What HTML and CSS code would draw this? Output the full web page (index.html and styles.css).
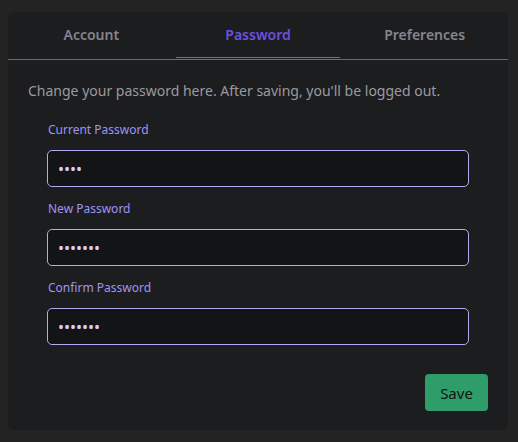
FILE: index.html
```html
<!DOCTYPE html>
<html lang="en">
<head>
<meta charset="utf-8">
<title>Password</title>
<link rel="stylesheet" href="styles.css">
</head>
<body>
<div class="card">
  <div class="tabs">
    <div class="tab">Account</div>
    <div class="tab active">Password</div>
    <div class="tab">Preferences</div>
  </div>
  <div class="body">
    <p class="desc">Change your password here. After saving, you'll be logged out.</p>
    <div class="form">
      <div class="field">
        <label class="label" for="cur">Current Password</label>
        <input class="input" id="cur" type="password" value="abcd">
      </div>
      <div class="field">
        <label class="label" for="new">New Password</label>
        <input class="input" id="new" type="password" value="abcdefg">
      </div>
      <div class="field">
        <label class="label" for="conf">Confirm Password</label>
        <input class="input" id="conf" type="password" value="abcdefg">
      </div>
    </div>
    <div class="actions">
      <button class="btn" type="button">Save</button>
    </div>
  </div>
</div>
</body>
</html>
```
FILE: styles.css
```css
html, body {
  margin: 0;
  padding: 0;
  background: #232323;
}
body {
  padding: 12px 10px 12px 8px;
  font-family: "Noto Sans", "Open Sans", sans-serif;
}
.card {
  width: 500px;
  height: 418px;
  box-sizing: border-box;
  background: #1c1d1f;
  border-radius: 6px;
  display: flex;
  flex-direction: column;
}
.tabs {
  display: grid;
  grid-template-columns: repeat(3, 1fr);
  border-bottom: 1px solid #6a6a70;
}
.tab {
  margin: 0 1px -1px;
  padding: 12px 0 11px;
  height: 22px;
  line-height: 22px;
  text-align: center;
  font-size: 14px;
  font-weight: 600;
  color: #85858d;
  border-bottom: 3px double transparent;
}
.tab.active {
  color: #6e4fe0;
  border-bottom-color: #7657e8;
}
.body {
  padding: 19px 20px 19px;
  display: flex;
  flex-direction: column;
  flex: 1;
}
.desc {
  margin: 0 0 16px;
  font-size: 14px;
  line-height: 24px;
  color: #9a9aa0;
}
.form {
  padding: 0 19px;
  display: flex;
  flex-direction: column;
  gap: 11px;
}
.field {
  display: flex;
  flex-direction: column;
}
.label {
  font-size: 12px;
  line-height: 21px;
  margin: 0 0 10px 1px;
  color: #a093f5;
}
.input {
  height: 37px;
  box-sizing: border-box;
  margin: 0;
  padding: 0 10px;
  background: #131416;
  border: 1px solid #b6a8f2;
  border-radius: 5px;
  color: #d6cdfb;
  font-size: 16px;
  font-family: "Noto Sans", sans-serif;
  letter-spacing: 0;
  outline: none;
}
.actions {
  margin-top: auto;
  display: flex;
  justify-content: flex-end;
}
.btn {
  width: 63px;
  height: 37px;
  border: none;
  border-radius: 4px;
  background: #2e9d69;
  color: #111213;
  font-size: 15px;
  font-family: "Noto Sans", sans-serif;
  padding: 0;
}
```
